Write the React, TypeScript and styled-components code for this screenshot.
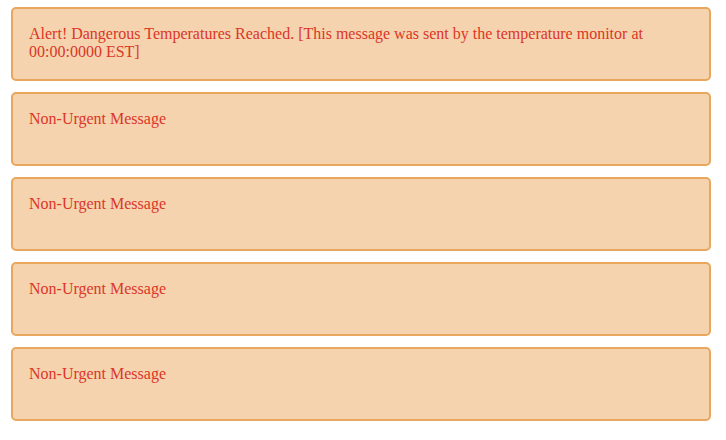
import React from "react";
import styled, { createGlobalStyle } from "styled-components";

const Global = createGlobalStyle`
  html, body { margin: 0; padding: 0; background: #ffffff; }
  body { font-family: "Liberation Serif", "Times New Roman", serif; }
`;

const List = styled.div`
  display: flex;
  flex-direction: column;
  gap: 11px;
  padding: 7px 0 0 11px;
  width: 700px;
`;

const Message = styled.div<{ $urgent?: boolean }>`
  box-sizing: border-box;
  min-height: 74px;
  padding: 16px 16px;
  background: #f4d3ae;
  border: 2px solid #e8a75c;
  border-radius: 5px;
  color: #dc3627;
  font-family: "Liberation Serif", "Times New Roman", serif;
  font-size: 16px;
  line-height: 18px;
`;

const messages = [
  { urgent: true, text: "Alert! Dangerous Temperatures Reached. [This message was sent by the temperature monitor at 00:00:0000 EST]" },
  { text: "Non-Urgent Message" },
  { text: "Non-Urgent Message" },
  { text: "Non-Urgent Message" },
  { text: "Non-Urgent Message" },
];

export default function App() {
  return (
    <>
      <Global />
      <List>
        {messages.map((m, i) => (
          <Message key={i} $urgent={m.urgent}>
            {m.text}
          </Message>
        ))}
      </List>
    </>
  );
}
